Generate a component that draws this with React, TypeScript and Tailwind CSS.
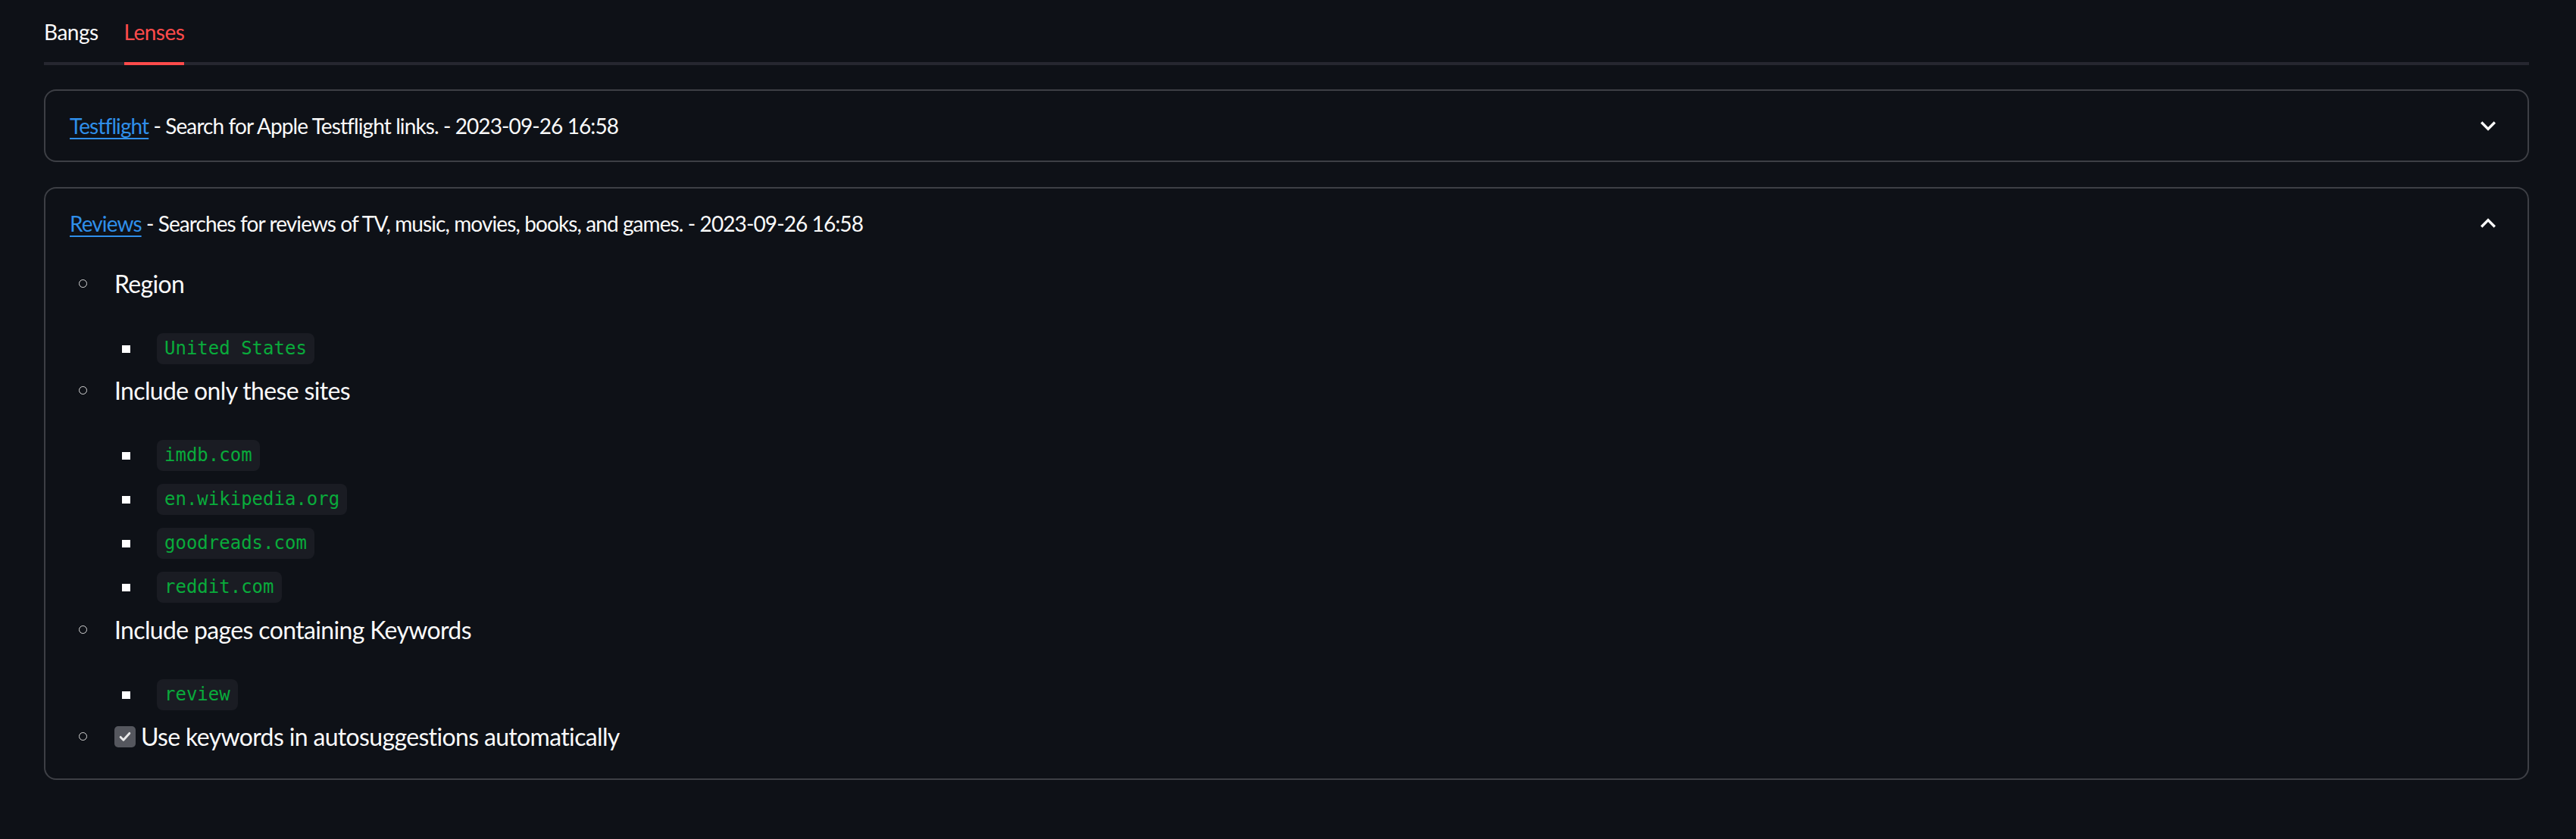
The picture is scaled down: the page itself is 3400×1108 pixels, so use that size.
import React from "react";

const sites = ["imdb.com", "en.wikipedia.org", "goodreads.com", "reddit.com"];

function Chevron({ up }: { up?: boolean }) {
  return (
    <svg width="40" height="40" viewBox="0 0 24 24" fill="#fafafa">
      {up ? (
        <path d="M12 8l-6 6 1.41 1.41L12 10.83l4.59 4.58L18 14z" />
      ) : (
        <path d="M16.59 8.59L12 13.17 7.41 8.59 6 10l6 6 6-6z" />
      )}
    </svg>
  );
}

function Circle() {
  return <span className="ml-[44px] mr-[36px] h-[11px] w-[11px] shrink-0 rounded-full border-[1.5px] border-[#d8d8d8]" />;
}

function Code({ children }: { children: React.ReactNode }) {
  return (
    <code className="inline-block h-[41px] rounded-[8px] bg-[#1a1c23] px-[10px] font-['DejaVu_Sans_Mono',monospace] text-[24px] leading-[41px] tracking-normal text-[#09ab3b]">
      {children}
    </code>
  );
}

function SubItem({ text, className = "" }: { text: string; className?: string }) {
  return (
    <div className={"flex h-[51px] items-center " + className}>
      <span className="ml-[101px] mr-[35px] h-[10px] w-[11px] shrink-0 bg-white" />
      <Code>{text}</Code>
    </div>
  );
}

function Item({ text, className = "" }: { text: string; className?: string }) {
  return (
    <div className={"flex h-[51px] items-center text-[32px] tracking-[-0.65px] " + className}>
      <Circle />
      <span>{text}</span>
    </div>
  );
}

function Header({ name, desc, open }: { name: string; desc: string; open?: boolean }) {
  return (
    <div className="flex h-[92px] items-center justify-between px-[32px] text-[28px] tracking-[-0.9px]">
      <div>
        <a href="#" className="text-[#2f8fea] underline underline-offset-[5px]">
          {name}
        </a>
        <span> - {desc} - 2023-09-26 16:58</span>
      </div>
      <Chevron up={open} />
    </div>
  );
}

export default function App() {
  return (
    <div className="min-h-screen bg-[#0e1117] font-['Lato',sans-serif] text-[#fafafa]">
      <div className="pl-[58px] pr-[62px]">
        <div className="flex gap-[34px] border-b-4 border-[#262730] text-[28px] tracking-[-0.5px]">
          <button className="-mb-[4px] border-b-4 border-transparent pt-[20px] pb-[18px] leading-[44px] text-[#fafafa]">
            Bangs
          </button>
          <button className="-mb-[4px] border-b-4 border-[#ff4b4b] pt-[20px] pb-[18px] leading-[44px] text-[#ff4b4b]">
            Lenses
          </button>
        </div>

        <div className="mt-[32px] flex flex-col gap-[33px]">
          <div className="rounded-[16px] border-2 border-[#3d3f45]">
            <Header name="Testflight" desc="Search for Apple Testflight links." />
          </div>

          <div className="rounded-[16px] border-2 border-[#3d3f45]">
            <Header
              name="Reviews"
              desc="Searches for reviews of TV, music, movies, books, and games."
              open
            />
            <div className="flex flex-col pt-[8px] pb-[30px]">
              <Item text="Region" />
              <SubItem text="United States" className="mt-[35px]" />
              <Item text="Include only these sites" className="mt-[4px]" />
              {sites.map((s, i) => (
                <SubItem key={s} text={s} className={i === 0 ? "mt-[35px]" : "mt-[7px]"} />
              ))}
              <Item text="Include pages containing Keywords" className="mt-[5px]" />
              <SubItem text="review" className="mt-[35px]" />
              <div className="mt-[4px] flex h-[51px] items-center text-[32px] tracking-[-0.65px]">
                <Circle />
                <span className="mr-[7px] flex h-[28px] w-[28px] shrink-0 items-center justify-center rounded-[5px] bg-[#55575e]">
                  <svg width="20" height="20" viewBox="0 0 24 24" fill="none" stroke="#e8e8e8" strokeWidth="3.5" strokeLinecap="round" strokeLinejoin="round">
                    <path d="M5 12.5l4.5 4.5L19 6.5" />
                  </svg>
                </span>
                <span>Use keywords in autosuggestions automatically</span>
              </div>
            </div>
          </div>
        </div>
      </div>
    </div>
  );
}
